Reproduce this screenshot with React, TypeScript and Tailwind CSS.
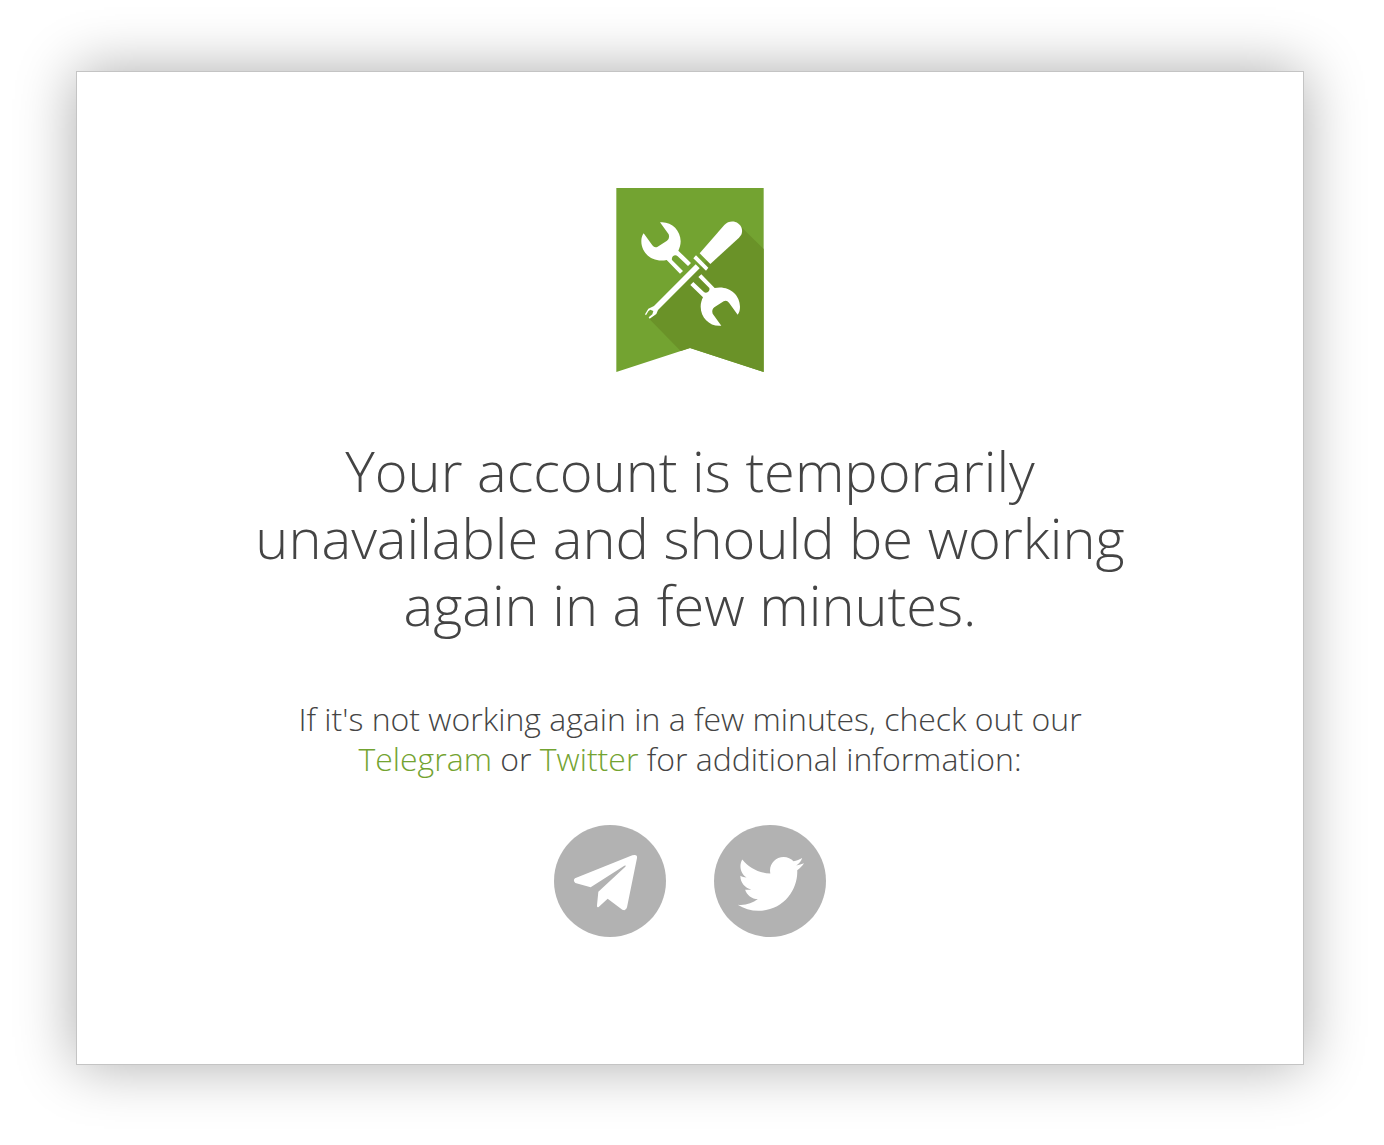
import type { ReactNode } from 'react';

interface SocialLinkProps {
  href: string;
  label: string;
  children: ReactNode;
}

function MaintenanceRibbon() {
  return (
    <svg viewBox="30 24 444 552" className="h-[184px] w-[148px]" aria-hidden="true">
      <path d="M31 24H473V576L252 504L31 576Z" fill="#73a331" />
      {/* long shadow */}
      <path d="M405 140L473 207V576L252 504L224 513L130 417L280 265L313 230Z" fill="#6a9228" />
      <g fill="#fff">
        <path id="wrench" d="M162 127C195 123 224 150 224 184C224 194 221 204 217 212L255 249L246 258L215 229C207 221 195 230 198 240L231 273L222 281L182 240C142 249 106 222 106 184C106 175 108 166 113 160L139 196Q146 205 155 200L183 182Q192 175 188 163Z" />
        <use href="#wrench" transform="rotate(180 254 282)" />
        {/* screwdriver */}
        <path d="M281 220L355 135C364 125 377 123 388 126C407 132 414 154 403 168L399 173L313 252Z" />
        <path d="M270 226L307 263L300 272L262 235Z" />
        <path d="M269 253L281 265L156 390L151 402L131 416L128 412L139 403L142 393L133 389L127 394L120 406L117 403L127 386L144 378Z" />
      </g>
    </svg>
  );
}

function TelegramIcon() {
  return (
    <svg viewBox="30 30 336 336" className="size-28" aria-hidden="true">
      <path
        fill="#fff"
        d="M93 190L265 121Q281 117 279 129L249 277Q246 289 235 284L191 251L164 276Q158 279 159 271L163 230L244 155Q248 150 241 152L140 217L94 204Q86 196 93 190Z"
      />
    </svg>
  );
}

function TwitterIcon() {
  return (
    <svg viewBox="0 0 336 336" className="size-28" aria-hidden="true">
      <path
        fill="#fff"
        transform="translate(71 77) scale(.389)"
        d="M459.37 151.716c.325 4.548.325 9.097.325 13.645 0 138.72-105.583 298.558-298.558 298.558-59.452 0-114.68-17.219-161.137-47.106 8.447.974 16.568 1.299 25.34 1.299 49.055 0 94.213-16.568 130.274-44.832-46.132-.975-84.792-31.188-98.112-72.772 6.498.974 12.995 1.624 19.818 1.624 9.421 0 18.843-1.3 27.614-3.573-48.081-9.747-84.143-51.98-84.143-102.985v-1.299c13.969 7.797 30.214 12.67 47.431 13.319-28.264-18.843-46.781-51.005-46.781-87.391 0-19.492 5.197-37.36 14.294-52.954 51.655 63.675 129.3 105.258 216.365 109.807-1.624-7.797-2.599-15.918-2.599-24.04 0-57.828 46.782-104.934 104.934-104.934 30.213 0 57.502 12.67 76.67 33.137 23.715-4.548 46.456-13.32 66.599-25.34-7.798 24.366-24.366 44.833-46.132 57.827 21.117-2.273 41.584-8.122 60.426-16.243-14.292 20.791-32.161 39.308-52.628 54.253z"
      />
    </svg>
  );
}

function SocialLink({ href, label, children }: SocialLinkProps) {
  return (
    <a href={href} aria-label={label} className="block size-28 rounded-full bg-[#b2b2b2] hover:bg-[#73a331]">
      {children}
    </a>
  );
}

const TELEGRAM_URL = '#telegram';
const TWITTER_URL = '#twitter';

export default function App() {
  return (
    <div className="bg-white pt-[71px] pr-20 pb-20 pl-[76px] font-['Open_Sans',sans-serif] font-light text-[#444]">
      <main className="flex flex-col items-center border border-[#c4c4c4] bg-white px-6 pt-[116px] pb-[127px] text-center shadow-[0_0_56px_rgba(0,0,0,0.33)]">
        <MaintenanceRibbon />

        <h1 className="mt-[65px] max-w-[900px] text-[56px] leading-[67px] font-light">
          Your account is temporarily unavailable and should be working again in a few minutes.
        </h1>

        <p className="mt-[61px] max-w-[800px] text-[32px] leading-[40px]">
          If it's not working again in a few minutes, check out our{' '}
          <a href={TELEGRAM_URL} className="text-[#73a331] hover:underline">Telegram</a> or{' '}
          <a href={TWITTER_URL} className="text-[#73a331] hover:underline">Twitter</a> for additional information:
        </p>

        <div className="mt-[46px] flex gap-12">
          <SocialLink href={TELEGRAM_URL} label="Telegram">
            <TelegramIcon />
          </SocialLink>
          <SocialLink href={TWITTER_URL} label="Twitter">
            <TwitterIcon />
          </SocialLink>
        </div>
      </main>
    </div>
  );
}
